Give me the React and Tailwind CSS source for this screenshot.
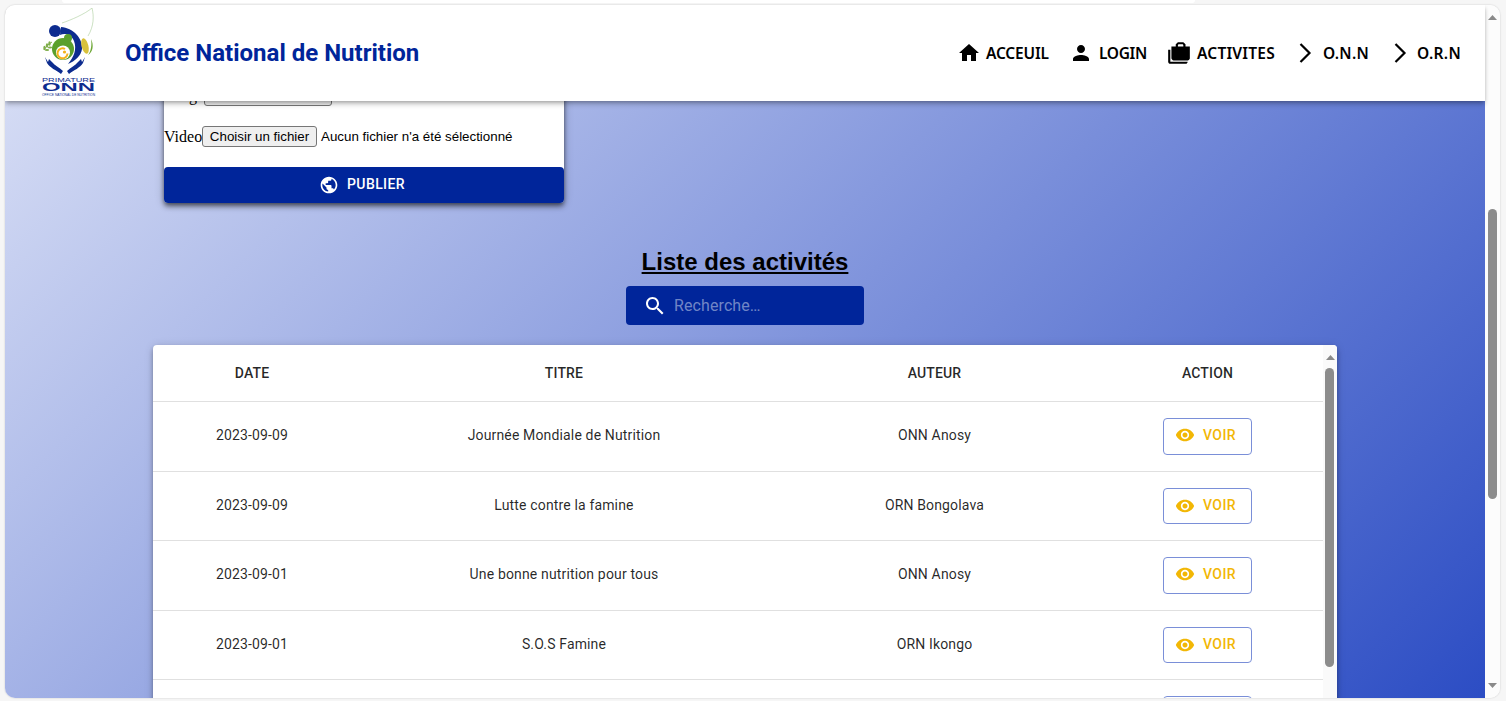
const rows = [
  { date: '2023-09-09', titre: 'Journée Mondiale de Nutrition', auteur: 'ONN Anosy' },
  { date: '2023-09-09', titre: 'Lutte contre la famine', auteur: 'ORN Bongolava' },
  { date: '2023-09-01', titre: 'Une bonne nutrition pour tous', auteur: 'ONN Anosy' },
  { date: '2023-09-01', titre: 'S.O.S Famine', auteur: 'ORN Ikongo' },
];

const Icon = ({ d, size = 24, className = '' }) => (
  <svg width={size} height={size} viewBox="0 0 24 24" fill="currentColor" className={`shrink-0 ${className}`}>
    <path d={d} />
  </svg>
);

const homePath = 'M10 20v-6h4v6h5v-8h3L12 3 2 12h3v8z';
const personPath = 'M12 12c2.21 0 4-1.79 4-4s-1.79-4-4-4-4 1.79-4 4 1.79 4 4 4zm0 2c-2.67 0-8 1.34-8 4v2h16v-2c0-2.66-5.33-4-8-4z';
const casesPath = 'M18 6V4l-2-2h-5L9 4v2H5v11s1 2 2 2h13s2-.98 2-2V6h-4zM4 9H2v11c0 1.11.89 2 2 2h14c1.11 0 2-.89 2-2H4V9zm7-4c0-.55.53-1 1-1h3c.55 0 1 .45 1 1v1h-5V5z';
const publicPath = 'M12 2C6.48 2 2 6.48 2 12s4.48 10 10 10 10-4.48 10-10S17.52 2 12 2zm-1 17.93c-3.95-.49-7-3.85-7-7.93 0-.62.08-1.21.21-1.79L9 15v1c0 1.1.9 2 2 2v1.93zm6.9-2.54c-.26-.81-1-1.39-1.9-1.39h-1v-3c0-.55-.45-1-1-1H8v-2h2c.55 0 1-.45 1-1V7h2c1.1 0 2-.9 2-2v-.41c2.93 1.19 5 4.06 5 7.41 0 2.08-.8 3.97-2.1 5.39z';
const searchPath = 'M15.5 14h-.79l-.28-.27C15.41 12.59 16 11.11 16 9.5 16 5.91 13.09 3 9.5 3S3 5.91 3 9.5 5.91 16 9.5 16c1.61 0 3.09-.59 4.23-1.57l.27.28v.79l5 4.99L20.49 19l-4.99-5zm-6 0C7.01 14 5 11.99 5 9.5S7.01 5 9.5 5 14 7.01 14 9.5 11.99 14 9.5 14z';
const eyePath = 'M12 4.5C7 4.5 2.73 7.61 1 12c1.73 4.39 6 7.5 11 7.5s9.27-3.11 11-7.5c-1.73-4.39-6-7.5-11-7.5zM12 17c-2.76 0-5-2.24-5-5s2.24-5 5-5 5 2.24 5 5-2.24 5-5 5zm0-8c-1.66 0-3 1.34-3 3s1.34 3 3 3 3-1.34 3-3-1.34-3-3-3z';

const Chevron = () => (
  <svg width="24" height="24" viewBox="0 0 24 24" fill="none" stroke="currentColor" strokeWidth="2.2" className="shrink-0">
    <path d="M7.5 3 L16.5 12 L7.5 21" />
  </svg>
);

const Arrow = ({ down = false }) => (
  <svg width="9" height="5" viewBox="0 0 9 5" fill="#8a8a8a">
    <path d={down ? 'M0 0 H9 L4.5 5 Z' : 'M0 5 H9 L4.5 0 Z'} />
  </svg>
);

const Logo = () => (
  <svg width="58" height="90" viewBox="0 0 58 90" className="shrink-0">
    <path d="M21 15 C30 12 44 6 51 0 C53 8 53 18 47 28" fill="none" stroke="#a9cc9b" strokeWidth="0.6" />
    {/* mother and child */}
    <circle cx="14" cy="23" r="6" fill="#0d2c8f" />
    <path d="M20 19 C32 20 42 30 41 41 C40 48 34 53 27 56 C33 49 36 41 33 33 C30 26 24 25 19 27 Z" fill="#0d2c8f" />
    <circle cx="22" cy="41" r="11" fill="#5aa02c" />
    <circle cx="22" cy="44.5" r="7" fill="#ffffff" />
    <circle cx="27" cy="30" r="4" fill="#5aa02c" />
    <path d="M24 41 A5 5 0 1 0 26.5 45.5" fill="none" stroke="#f3b31a" strokeWidth="2" />
    <circle cx="23.5" cy="44" r="1.6" fill="#f3b31a" />
    {/* corn and wheat */}
    <ellipse cx="44" cy="38" rx="3.4" ry="8" transform="rotate(-14 44 38)" fill="#d8c13c" />
    <path d="M47 47 C50 43 51 37 50 31 C53 37 52 44 47 47 Z" fill="#6fa837" />
    <path d="M3 42 C5 38 8 36 11 34" fill="none" stroke="#7fae4a" strokeWidth="1" />
    <ellipse cx="3.5" cy="40" rx="1.2" ry="2.2" fill="#7fae4a" />
    <ellipse cx="6" cy="37.5" rx="1.2" ry="2.2" fill="#7fae4a" />
    <ellipse cx="8.5" cy="35.5" rx="1.2" ry="2.2" fill="#7fae4a" />
    <ellipse cx="6" cy="42" rx="2.2" ry="1.1" fill="#7fae4a" />
    <ellipse cx="9" cy="39.5" rx="2.2" ry="1.1" fill="#7fae4a" />
    {/* hands */}
    <path d="M4 49 L6 55 C9 60 15 62 20 66 L22 63 C18 59 14 58 11 54 L8 51 L7 54 Z" fill="#0d2c8f" />
    <path d="M44 49 L42 55 C39 60 33 62 28 66 L26 63 C30 59 34 58 37 54 L40 51 L41 54 Z" fill="#0d2c8f" />
    <text x="1" y="74" fontSize="6" fill="#0d2c8f" textLength="53" lengthAdjust="spacingAndGlyphs" fontFamily="Liberation Sans, sans-serif">PRIMATURE</text>
    <text x="1" y="83" fontSize="11" fontWeight="700" fill="#0d2c8f" textLength="53" lengthAdjust="spacingAndGlyphs" fontFamily="Liberation Sans, sans-serif">ONN</text>
    <text x="1" y="88" fontSize="3" fill="#0d2c8f" textLength="53" lengthAdjust="spacingAndGlyphs" fontFamily="Liberation Sans, sans-serif">OFFICE NATIONAL DE NUTRITION</text>
  </svg>
);

const NavItem = ({ icon, label, className = '' }) => (
  <div className={`flex items-center font-['Noto_Sans',sans-serif] text-[15.5px] font-semibold leading-none text-black ${className}`}>
    {icon}
    <span className="pt-[2px]">{label}</span>
  </div>
);

const FileButton = ({ width, children }) => (
  <button type="button" className={`h-[21px] ${width} shrink-0 rounded-[3px] border border-[#767676] bg-[#efefef] font-['Liberation_Sans',sans-serif] text-[13.33px] leading-none text-black`}>
    {children}
  </button>
);

const VoirButton = ({ children, className = '' }) => (
  <button type="button" className={`mx-auto flex h-[36.5px] w-[89px] items-center justify-start gap-[8px] rounded-[4px] border border-[#7a8fd8] pl-[11px] text-[14px] font-medium tracking-[0.4px] text-[#f2b705] ${className}`}>
    {children}
  </button>
);

export default function App() {
  return (
    <div className="flex h-[701px] w-[1506px] flex-col overflow-hidden bg-[#f6f6f6] font-['Roboto',sans-serif]">
      <div className="ml-[62px] h-[3px] w-[1133px] shrink-0 rounded-b-[4px] bg-white" />
      <div className="ml-[5px] mt-[2px] flex h-[693px] w-[1495px] shrink-0 overflow-hidden rounded-[10px] bg-[#fcfcfc] shadow-[0_0_2px_rgba(0,0,0,0.2)]">
        <div className="flex min-w-0 flex-1 flex-col">
          <header className="relative z-10 flex h-[96px] shrink-0 items-center bg-white pl-[36px] pr-[24px] shadow-[0_2px_4px_-1px_rgba(0,0,0,0.3),0_4px_5px_0_rgba(0,0,0,0.14)]">
            <Logo />
            <h1 className="ml-[26px] text-[24px] font-bold leading-none text-[#00259a]">Office National de Nutrition</h1>
            <nav className="ml-auto flex items-center">
              <NavItem icon={<Icon d={homePath} />} label="ACCEUIL" className="gap-[5px] tracking-[-0.15px]" />
              <NavItem icon={<Icon d={personPath} />} label="LOGIN" className="ml-[20px] gap-[6px] tracking-[-0.3px]" />
              <NavItem icon={<Icon d={casesPath} size={26} />} label="ACTIVITES" className="ml-[19px] gap-[5px] tracking-[0.2px]" />
              <NavItem icon={<Chevron />} label="O.N.N" className="ml-[18px] gap-[6px] tracking-[0.3px]" />
              <NavItem icon={<Chevron />} label="O.R.N" className="ml-[19px] gap-[5px] tracking-[0.3px]" />
            </nav>
          </header>

          <main className="min-h-0 flex-1 overflow-hidden bg-[linear-gradient(135deg,#d4dbf4_0%,#2c4dc4_100%)]">
            <div className="mx-auto w-[1184px]">
              <section className="-mt-4 ml-[11px] w-[400px] rounded-[4px] bg-white shadow-[0_2px_4px_-1px_rgba(0,0,0,0.45),0_4px_5px_0_rgba(0,0,0,0.3),0_1px_10px_0_rgba(0,0,0,0.25)]">
                <div className="flex items-end font-['Liberation_Serif',serif] text-[16px] leading-[21px] text-black">
                  <span className="w-[40px]">Image</span>
                  <FileButton width="w-[128px]" />
                </div>
                <div className="mt-[20px] flex items-center font-['Liberation_Serif',serif] text-[16px] leading-[21px] text-black">
                  <span className="w-[38px]">Video</span>
                  <FileButton width="w-[115px]">Choisir un fichier</FileButton>
                  <span className="ml-[4px] font-['Liberation_Sans',sans-serif] text-[13.33px]">Aucun fichier n'a été sélectionné</span>
                </div>
                <button type="button" className="mt-[20px] flex h-[36px] w-full items-center justify-center gap-[8px] rounded-[4px] bg-[#00259a] pb-[1px] pr-[4px] text-[14px] font-medium tracking-[0.4px] text-white">
                  <Icon d={publicPath} size={20} />
                  PUBLIER
                </button>
              </section>

              <h2 className="mt-[45px] text-center font-['Liberation_Sans',sans-serif] text-[24px] font-bold leading-[28px] text-black underline">Liste des activités</h2>

              <div className="mx-auto mt-[10px] flex h-[39px] w-[238px] items-center rounded-[4px] bg-[#00259a] pl-[17px] text-white">
                <Icon d={searchPath} size={24} />
                <span className="ml-[7px] text-[16px] tracking-[0.1px] text-white/45">Recherche…</span>
              </div>

              <div className="mt-[20px] flex h-[360px] overflow-hidden rounded-t-[4px] bg-white shadow-[0_2px_4px_-1px_rgba(0,0,0,0.25),0_4px_5px_0_rgba(0,0,0,0.16),0_1px_10px_0_rgba(0,0,0,0.14)]">
                <table className="w-[1170px] shrink-0 table-fixed self-start border-collapse text-center text-[14px] tracking-[0.15px] text-black/85">
                  <colgroup>
                    <col className="w-[198px]" />
                    <col className="w-[426px]" />
                    <col className="w-[315px]" />
                    <col className="w-[231px]" />
                  </colgroup>
                  <thead>
                    <tr className="border-b border-[#e0e0e0]">
                      {['DATE', 'TITRE', 'AUTEUR', 'ACTION'].map((h) => (
                        <th key={h} className="p-4 text-[14px] font-medium leading-6">{h}</th>
                      ))}
                    </tr>
                  </thead>
                  <tbody>
                    {rows.map((row, i) => {
                      // half-pixel row heights round differently on odd rows
                      const cellPad = i % 2 ? 'pb-4' : 'pb-[18px]';
                      return (
                        <tr key={i} className="border-b border-[#e0e0e0]">
                          <td className={`px-4 pt-4 ${cellPad}`}>{row.date}</td>
                          <td className={`px-4 pt-4 ${cellPad}`}>{row.titre}</td>
                          <td className={`px-4 pt-4 ${cellPad}`}>{row.auteur}</td>
                          <td className="p-4">
                            <VoirButton className={i % 2 ? '' : 'pb-[2px]'}>
                              <Icon d={eyePath} size={20} />
                              VOIR
                            </VoirButton>
                          </td>
                        </tr>
                      );
                    })}
                    {/* next row is almost entirely below the fold, only the button's top edge shows */}
                    <tr>
                      <td className="p-4" colSpan={3} />
                      <td className="p-4">
                        <VoirButton />
                      </td>
                    </tr>
                  </tbody>
                </table>
                <div className="flex w-[14px] shrink-0 flex-col items-center bg-[#fafafa] pt-[10px]">
                  <Arrow />
                  <div className="ml-[-1px] mt-[8px] h-[299px] w-[9px] rounded-full bg-[#8c8c8c]" />
                </div>
              </div>
            </div>
          </main>
        </div>

        <aside className="flex w-[15px] shrink-0 flex-col items-center bg-[#fcfcfc] pb-[10px] pt-[10px]">
          <Arrow />
          <div className="mt-[189px] h-[290px] w-[9px] rounded-full bg-[#8c8c8c]" />
          <div className="mt-auto">
            <Arrow down />
          </div>
        </aside>
      </div>
    </div>
  );
}
